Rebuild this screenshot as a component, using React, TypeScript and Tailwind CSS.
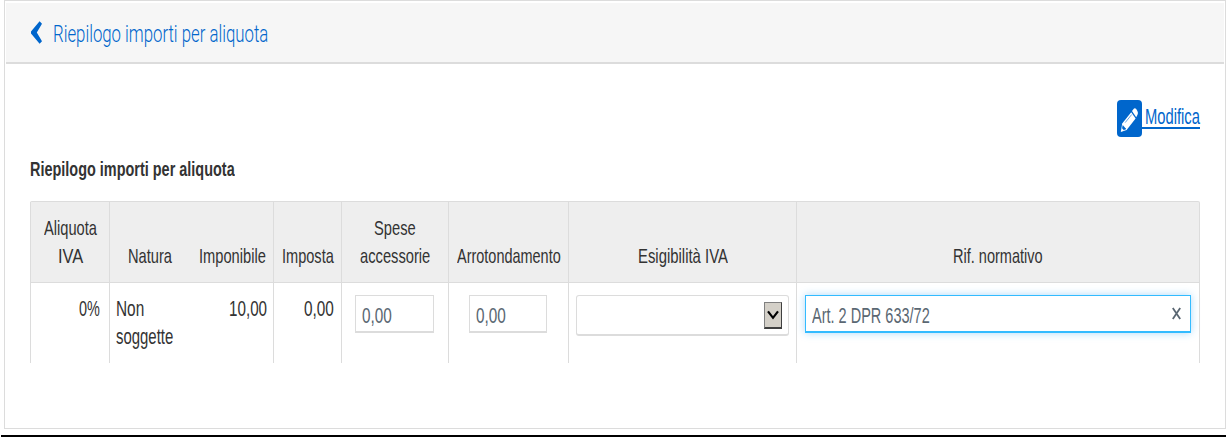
import { useLayoutEffect, useRef, useState } from "react";
import type { ReactNode } from "react";

/** Condensed text: the line is narrowed horizontally to the given width. */
function Narrow({ width, children, className = "" }: { width: number; children: string; className?: string }) {
  const ref = useRef<HTMLSpanElement>(null);
  const [scale, setScale] = useState(1);
  useLayoutEffect(() => {
    if (ref.current) setScale(width / ref.current.offsetWidth);
  }, [width, children]);
  return (
    <span className={`block shrink-0 whitespace-nowrap ${className}`} style={{ width }}>
      <span ref={ref} className="inline-block origin-left align-top" style={{ transform: `scaleX(${scale})` }}>
        {children}
      </span>
    </span>
  );
}

function HeadCell({ children }: { children: ReactNode }) {
  return (
    <div className="flex flex-col items-center justify-end border-l border-[#dcdcdc] pb-[12px]">{children}</div>
  );
}

function BodyCell({ children, className = "" }: { children: ReactNode; className?: string }) {
  return <div className={`flex items-start border-l border-[#dcdcdc] pt-[12px] ${className}`}>{children}</div>;
}

function AmountField({ value }: { value: string }) {
  return (
    <div className="h-[38px] w-full border border-b-2 border-[#dcdcdc] bg-white pt-[6px] pl-[6px] text-[22px] text-[#5a6772]">
      <Narrow width={30}>{value}</Narrow>
    </div>
  );
}

const columns = "grid-cols-[79px_164px_68px_107px_120px_228px_403px]";

export default function App() {
  return (
    <div className="h-[437px] w-[1228px] overflow-hidden bg-white font-['Liberation_Sans',Arial,sans-serif] text-[21px] leading-[28px] text-[#333]">
      <div className="ml-[4px] h-[429px] w-[1222px] border border-[#dcdcdc]">
        <header className="mx-px mt-[2px] flex h-[61px] items-start border-b-2 border-[#dcdcdc] bg-[#f6f6f6] pl-[25px] text-[#0066cc]">
          <svg className="mt-[18px] h-[23px] w-[11px]" viewBox="0 0 11 23" fill="currentColor">
            <path d="M8.6.3 11 2.8 5.8 11.5 11 20.2 8.6 22.7 0 12.6v-2.2z" />
          </svg>
          <Narrow width={215} className="mt-[18px] ml-[11px] font-['Roboto',sans-serif] text-[23px] font-light">
            Riepilogo importi per aliquota
          </Narrow>
        </header>

        <main className="pr-[25px] pl-[25px]">
          <div className="mt-[36px] flex h-[37px] items-start justify-end text-[#0066cc]">
            <svg className="h-[37px] w-[25px]" viewBox="0 0 25 37">
              <rect width="25" height="37" rx="4" fill="#0066cc" />
              <g fill="#fff">
                <path d="M14.2 12.2 5.2 23.5 3.8 32 9.6 30 18.6 18.5z" />
                <path d="M15 11.1 16.6 9Q17.8 7.6 19.2 9L20.4 11Q21.4 13 20.5 14.8L19.2 17.2z" />
                <path d="M5.9 25.6 8.9 29 6.6 29.8 5.4 28.2zM8.2 22.6 14.7 14.5" fill="#0066cc" stroke="#0066cc" strokeWidth=".6" />
              </g>
            </svg>
            <div className="h-[29px] border-b-2 border-[#0066cc] pl-[3px] text-[22px]">
              <Narrow width={55} className="pt-[3px]">Modifica</Narrow>
            </div>
          </div>

          <h2 className="mt-[18px] h-[46px] font-bold">
            <Narrow width={205}>Riepilogo importi per aliquota</Narrow>
          </h2>

          <div className="w-[1170px]">
            <div className={`grid h-[82px] rounded-t-[2px] border-t border-r border-b border-[#dcdcdc] bg-[#eee] ${columns}`}>
              <HeadCell>
                <Narrow width={53}>Aliquota</Narrow>
                <Narrow width={25}>IVA</Narrow>
              </HeadCell>
              <div className="flex items-end justify-between border-l border-[#dcdcdc] pr-[7px] pb-[12px] pl-[18px]">
                <Narrow width={44}>Natura</Narrow>
                <Narrow width={67}>Imponibile</Narrow>
              </div>
              <HeadCell>
                <Narrow width={52}>Imposta</Narrow>
              </HeadCell>
              <HeadCell>
                <Narrow width={42}>Spese</Narrow>
                <Narrow width={70}>accessorie</Narrow>
              </HeadCell>
              <HeadCell>
                <Narrow width={104}>Arrotondamento</Narrow>
              </HeadCell>
              <HeadCell>
                <Narrow width={90}>Esigibilità IVA</Narrow>
              </HeadCell>
              <HeadCell>
                <Narrow width={90}>Rif. normativo</Narrow>
              </HeadCell>
            </div>

            <div className={`grid h-[80px] border-r border-[#dcdcdc] text-[22px] ${columns}`}>
              <BodyCell className="justify-end pr-[9px]">
                <Narrow width={21}>0%</Narrow>
              </BodyCell>
              <BodyCell className="justify-between pr-[6px] pl-[6px]">
                <div>
                  <Narrow width={28}>Non</Narrow>
                  <Narrow width={57}>soggette</Narrow>
                </div>
                <Narrow width={38}>10,00</Narrow>
              </BodyCell>
              <BodyCell className="justify-end pr-[7px]">
                <Narrow width={30}>0,00</Narrow>
              </BodyCell>
              <BodyCell className="pr-[14px] pl-[13px]">
                <AmountField value="0,00" />
              </BodyCell>
              <BodyCell className="pr-[21px] pl-[20px]">
                <AmountField value="0,00" />
              </BodyCell>
              <BodyCell className="pr-[7px] pl-[7px]">
                <div className="flex h-[41px] w-full justify-end rounded-[3px] border border-b-2 border-[#dcdcdc] pt-[6px] pr-[6px]">
                  <div className="flex h-[27px] w-[18px] items-center justify-center border border-b-2 border-t-[#808080] border-r-[#404040] border-b-[#404040] border-l-[#808080] bg-[#d4d0c8] text-black">
                    <svg className="mt-[-1px] h-[10px] w-[12px]" viewBox="0 0 12 10" fill="none" stroke="currentColor" strokeWidth="2.2">
                      <path d="m1 1.3 5 6.5 5-6.5" />
                    </svg>
                  </div>
                </div>
              </BodyCell>
              <BodyCell className="pr-[8px] pl-[8px]">
                <div className="flex h-[38px] w-full justify-between border border-b-2 border-[#33bbff] bg-white pt-[6px] pr-[9px] pl-[6px] text-[22px] text-[#5a6772] shadow-[0_0_8px_rgba(51,160,240,0.4)]">
                  <Narrow width={118}>Art. 2 DPR 633/72</Narrow>
                  <svg className="mt-[5px] h-[13px] w-[9px]" viewBox="0 0 9 13" fill="none" stroke="currentColor" strokeWidth="1.8">
                    <path d="m.8 1 7.4 11M8.2 1 .8 12" />
                  </svg>
                </div>
              </BodyCell>
            </div>
          </div>
        </main>
      </div>
      <div className="mt-[6px] ml-px h-[2px] w-[1225px] bg-black" />
    </div>
  );
}
